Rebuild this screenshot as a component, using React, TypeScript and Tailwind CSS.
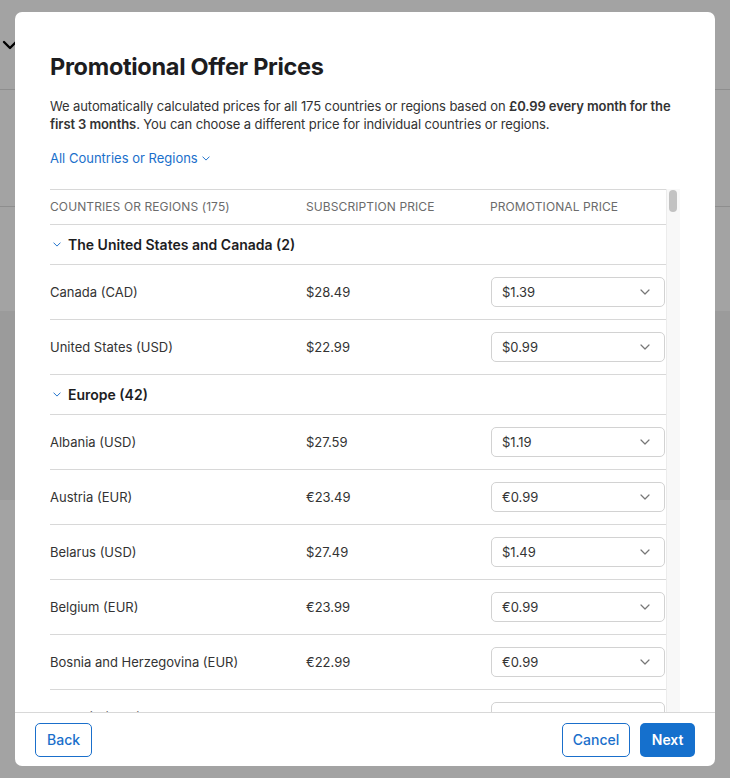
type Row = { name: string; price: string; promo: string };
type Group = { title: string; rows: Row[] };

const groups: Group[] = [
  {
    title: "The United States and Canada (2)",
    rows: [
      { name: "Canada (CAD)", price: "$28.49", promo: "$1.39" },
      { name: "United States (USD)", price: "$22.99", promo: "$0.99" },
    ],
  },
  {
    title: "Europe (42)",
    rows: [
      { name: "Albania (USD)", price: "$27.59", promo: "$1.19" },
      { name: "Austria (EUR)", price: "€23.49", promo: "€0.99" },
      { name: "Belarus (USD)", price: "$27.49", promo: "$1.49" },
      { name: "Belgium (EUR)", price: "€23.99", promo: "€0.99" },
      { name: "Bosnia and Herzegovina (EUR)", price: "€22.99", promo: "€0.99" },
      { name: "Bulgaria (BGN)", price: "BGN 45.99", promo: "BGN 1.99" },
    ],
  },
];

function Chevron({ className }: { className?: string }) {
  return (
    <svg viewBox="0 0 10 6" className={className} fill="none">
      <path d="M1 1l4 4 4-4" stroke="currentColor" strokeWidth="1.2" strokeLinecap="round" strokeLinejoin="round" />
    </svg>
  );
}

function PriceSelect({ value }: { value: string }) {
  return (
    <div className="flex h-[30px] w-[174px] items-center justify-between rounded-[5px] border border-[#d2d2d2] bg-white pl-[10px] pr-[14px] text-[13px] text-[#333]">
      <span className="mt-[1px]">{value}</span>
      <Chevron className="h-[6px] w-[10px] text-[#777]" />
    </div>
  );
}

export default function App() {
  return (
    <div
      className="relative h-[778px] w-[730px] overflow-hidden bg-[#a3a3a3]"
      style={{ fontFamily: "Inter, 'Open Sans', sans-serif" }}
    >
      {/* dimmed page behind */}
      <div className="flex flex-col">
        <div className="flex h-[90px] items-center border-b border-[#8e8e8e] pl-[2px]">
          <svg viewBox="0 0 16 10" className="h-[10px] w-[16px] text-black" fill="none">
            <path d="M2 2l6 6 6-6" stroke="currentColor" strokeWidth="2.4" strokeLinecap="round" strokeLinejoin="round" />
          </svg>
        </div>
        <div className="h-[117px] border-b border-[#8e8e8e]"></div>
        <div className="h-[104px]"></div>
        <div className="h-[189px] bg-[#9b9b9b]"></div>
      </div>

      {/* modal */}
      <div className="absolute left-[15px] top-[12px] flex h-[754px] w-[700px] flex-col rounded-[7px] bg-white">
        <div className="flex min-h-0 flex-1 flex-col px-[35px] pt-[40px]">
          <h1 className="text-[23.5px] font-bold leading-[30px] tracking-[-0.3px] text-[#1d1d1f]">
            Promotional Offer Prices
          </h1>
          <p className="mt-[15px] text-[13px] leading-[18px] tracking-[-0.1px] text-[#333]">
            We automatically calculated prices for all 175 countries or regions based on{" "}
            <b className="font-semibold">£0.99 every month for the first 3 months</b>. You can
            choose a different price for individual countries or regions.
          </p>
          <button className="mt-[16px] flex items-center gap-[4px] self-start text-[13px] leading-[18px] text-[#1a6fcb]">
            All Countries or Regions
            <Chevron className="mt-[1px] h-[5px] w-[8px]" />
          </button>

          <div className="mt-[22px] flex min-h-0 flex-1 overflow-hidden">
            <div className="flex-1">
              <div className="grid h-[36px] grid-cols-[256px_184px_1fr] items-center border-y border-[#d8d8d8] text-[12px] uppercase tracking-[0.1px] text-[#6b6b6b]">
                <span>Countries or Regions (175)</span>
                <span>Subscription Price</span>
                <span>Promotional Price</span>
              </div>
              {groups.map((g) => (
                <div key={g.title}>
                  <div className="flex h-[40px] items-center gap-[7px] border-b border-[#d8d8d8] pl-[3px] text-[14px] font-semibold text-[#1d1d1f]">
                    <Chevron className="h-[5px] w-[8px] text-[#1a6fcb]" />
                    {g.title}
                  </div>
                  {g.rows.map((r) => (
                    <div
                      key={r.name}
                      className="grid h-[55px] grid-cols-[256px_184px_1fr] items-center border-b border-[#d8d8d8] text-[13px] text-[#333]"
                    >
                      <span className="mt-[2px]">{r.name}</span>
                      <span className="mt-[2px]">{r.price}</span>
                      <div className="pl-[1px]">
                        <PriceSelect value={r.promo} />
                      </div>
                    </div>
                  ))}
                </div>
              ))}
            </div>
            <div className="w-[14px] border-l border-[#ececec] bg-[#f8f8f8] pl-[2px] pt-[1px]">
              <div className="h-[22px] w-[8px] rounded-full bg-[#c2c2c2]"></div>
            </div>
          </div>
        </div>

        <div className="flex h-[54px] items-center justify-between border-t border-[#d8d8d8] px-[20px]">
          <button className="h-[34px] rounded-[5px] border border-[#1a6fcb] px-[11px] text-[14px] font-medium text-[#1a6fcb]">
            Back
          </button>
          <div className="flex gap-[10px]">
            <button className="h-[34px] rounded-[5px] border border-[#1a6fcb] px-[10px] text-[14px] font-medium text-[#1a6fcb]">
              Cancel
            </button>
            <button className="h-[34px] rounded-[5px] bg-[#1570cd] px-[11.5px] text-[14px] font-semibold text-white">
              Next
            </button>
          </div>
        </div>
      </div>
    </div>
  );
}
